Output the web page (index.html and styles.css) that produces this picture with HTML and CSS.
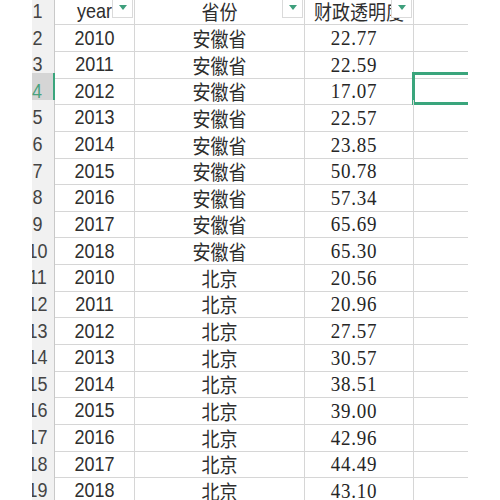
FILE: index.html
```html
<!DOCTYPE html>
<html>
<head>
<meta charset="utf-8">
<link rel="stylesheet" href="styles.css">
</head>
<body>
<div class="viewport">
  <div class="grid">
    <div class="row head">
      <div class="rh"><span class="t">1</span></div>
      <div class="c"><span class="t">year</span><span class="filter"><i></i></span></div>
      <div class="c"><span class="t">省份</span><span class="filter"><i></i></span></div>
      <div class="c"><span class="t">财政透明度</span><span class="filter"><i></i></span></div>
      <div class="c"></div>
    </div>
    <div class="row"><div class="rh"><span class="t">2</span></div><div class="c"><span class="t">2010</span></div><div class="c"><span class="t">安徽省</span></div><div class="c num"><span class="t">22.77</span></div><div class="c"></div></div>
    <div class="row"><div class="rh"><span class="t">3</span></div><div class="c"><span class="t">2011</span></div><div class="c"><span class="t">安徽省</span></div><div class="c num"><span class="t">22.59</span></div><div class="c"></div></div>
    <div class="row"><div class="rh active"><span class="t">4</span></div><div class="c"><span class="t">2012</span></div><div class="c"><span class="t">安徽省</span></div><div class="c num"><span class="t">17.07</span></div><div class="c sel"></div></div>
    <div class="row"><div class="rh"><span class="t">5</span></div><div class="c"><span class="t">2013</span></div><div class="c"><span class="t">安徽省</span></div><div class="c num"><span class="t">22.57</span></div><div class="c"></div></div>
    <div class="row"><div class="rh"><span class="t">6</span></div><div class="c"><span class="t">2014</span></div><div class="c"><span class="t">安徽省</span></div><div class="c num"><span class="t">23.85</span></div><div class="c"></div></div>
    <div class="row"><div class="rh"><span class="t">7</span></div><div class="c"><span class="t">2015</span></div><div class="c"><span class="t">安徽省</span></div><div class="c num"><span class="t">50.78</span></div><div class="c"></div></div>
    <div class="row"><div class="rh"><span class="t">8</span></div><div class="c"><span class="t">2016</span></div><div class="c"><span class="t">安徽省</span></div><div class="c num"><span class="t">57.34</span></div><div class="c"></div></div>
    <div class="row"><div class="rh"><span class="t">9</span></div><div class="c"><span class="t">2017</span></div><div class="c"><span class="t">安徽省</span></div><div class="c num"><span class="t">65.69</span></div><div class="c"></div></div>
    <div class="row"><div class="rh"><span class="t">10</span></div><div class="c"><span class="t">2018</span></div><div class="c"><span class="t">安徽省</span></div><div class="c num"><span class="t">65.30</span></div><div class="c"></div></div>
    <div class="row"><div class="rh"><span class="t">11</span></div><div class="c"><span class="t">2010</span></div><div class="c"><span class="t">北京</span></div><div class="c num"><span class="t">20.56</span></div><div class="c"></div></div>
    <div class="row"><div class="rh"><span class="t">12</span></div><div class="c"><span class="t">2011</span></div><div class="c"><span class="t">北京</span></div><div class="c num"><span class="t">20.96</span></div><div class="c"></div></div>
    <div class="row"><div class="rh"><span class="t">13</span></div><div class="c"><span class="t">2012</span></div><div class="c"><span class="t">北京</span></div><div class="c num"><span class="t">27.57</span></div><div class="c"></div></div>
    <div class="row"><div class="rh"><span class="t">14</span></div><div class="c"><span class="t">2013</span></div><div class="c"><span class="t">北京</span></div><div class="c num"><span class="t">30.57</span></div><div class="c"></div></div>
    <div class="row"><div class="rh"><span class="t">15</span></div><div class="c"><span class="t">2014</span></div><div class="c"><span class="t">北京</span></div><div class="c num"><span class="t">38.51</span></div><div class="c"></div></div>
    <div class="row"><div class="rh"><span class="t">16</span></div><div class="c"><span class="t">2015</span></div><div class="c"><span class="t">北京</span></div><div class="c num"><span class="t">39.00</span></div><div class="c"></div></div>
    <div class="row"><div class="rh"><span class="t">17</span></div><div class="c"><span class="t">2016</span></div><div class="c"><span class="t">北京</span></div><div class="c num"><span class="t">42.96</span></div><div class="c"></div></div>
    <div class="row"><div class="rh"><span class="t">18</span></div><div class="c"><span class="t">2017</span></div><div class="c"><span class="t">北京</span></div><div class="c num"><span class="t">44.49</span></div><div class="c"></div></div>
    <div class="row"><div class="rh"><span class="t">19</span></div><div class="c"><span class="t">2018</span></div><div class="c"><span class="t">北京</span></div><div class="c num"><span class="t">43.10</span></div><div class="c"></div></div>
  </div>
</div>
</body>
</html>
```

FILE: styles.css
```css
html, body {
  margin: 0;
  padding: 0;
  background: #ffffff;
}
body {
  width: 500px;
  height: 500px;
  overflow: hidden;
  font-family: "Liberation Sans", "Noto Sans CJK SC", sans-serif;
  font-size: 18px;
  color: #2e2e2e;
}
.viewport {
  margin-left: 32px;
  width: 436px;
  height: 500px;
  overflow: hidden;
}
.grid {
  margin-left: -12px;
  margin-top: -6.65px;
}
.row {
  display: grid;
  grid-template-columns: 35px 80px 170px 109px 80px;
  height: 26.65px;
}
.rh, .c {
  box-sizing: border-box;
  border-bottom: 1px solid #d6d6d6;
  border-right: 1px solid #d6d6d6;
  display: flex;
  align-items: center;
  justify-content: center;
  padding-top: 5px;
  position: relative;
  white-space: nowrap;
}
.rh {
  background: #f1f1f1;
  border-bottom-color: #dedede;
  border-right-color: #c9c9c9;
  color: #444;
  padding-left: 1px;
}
.rh.active {
  background: #d5d5d5;
  color: #4aa27e;
  border-right: 2px solid #3aa57c;
}
.t {
  display: inline-block;
  transform: scaleY(1.12);
}
.num {
  font-family: "Liberation Serif", "Noto Sans CJK SC", serif;
  font-size: 19px;
  letter-spacing: 0.8px;
  padding-right: 10px;
  color: #262626;
}
.filter {
  position: absolute;
  z-index: 1;
  right: 1px;
  top: 0;
  width: 21px;
  height: 25px;
  box-sizing: border-box;
  border: 1px solid #dadada;
  background: #ffffff;
  display: flex;
  justify-content: center;
  align-items: flex-start;
  padding-top: 11px;
}
.filter i {
  display: block;
  width: 0;
  height: 0;
  border-left: 4.5px solid transparent;
  border-right: 4.5px solid transparent;
  border-top: 5px solid #3e9f7c;
}
.sel::after {
  content: "";
  position: absolute;
  left: -2px;
  top: -1px;
  right: -2px;
  bottom: -1px;
  border: 3px solid #3aa57c;
}
```
